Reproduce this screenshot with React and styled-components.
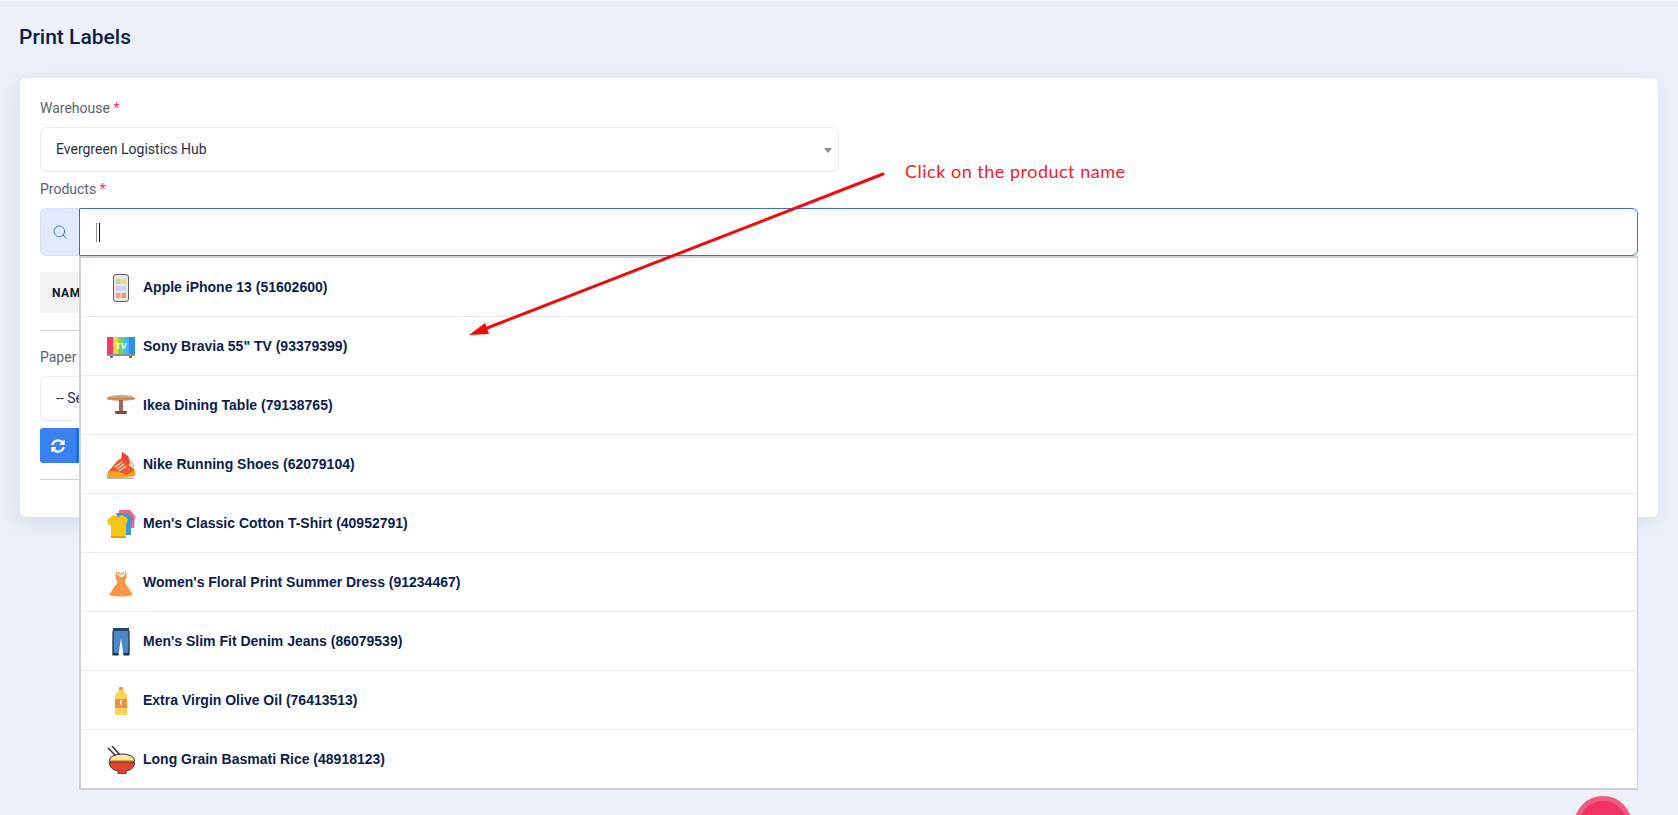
import React from "react";
import styled, { createGlobalStyle } from "styled-components";
import { Search } from "lucide-react";
import { FaSyncAlt } from "react-icons/fa";

const GlobalStyle = createGlobalStyle`
  html, body {
    margin: 0;
    height: 100%;
    overflow: hidden;
    background: #ebf0fa;
    font-family: Roboto, "Liberation Sans", sans-serif;
  }
  * { box-sizing: border-box; }
`;

const Page = styled.div`
  position: relative;
  height: 815px;
  padding: 24px 20px 0 20px;
  border-top: 1px solid #f6f7fb;
`;
const Title = styled.h1`
  margin: 0 0 28px -1px;
  height: 25px;
  font-size: 21px;
  line-height: 25px;
  font-weight: 500;
  color: #0d1f44;
`;
const Card = styled.div`
  background: #fff;
  border-radius: 6px;
  padding: 20px 20px 37px;
  height: 439px;
  box-shadow: -3px 6px 20px rgba(90, 100, 135, 0.14);
`;
const Label = styled.label`
  display: block;
  font-size: 14px;
  line-height: 20px;
  color: #5b6270;
  margin-bottom: 9px;
`;
const Star = styled.span`
  color: #f0355f;
`;
const SelectBox = styled.div`
  position: relative;
  display: flex;
  align-items: center;
  width: 799px;
  height: 45px;
  padding: 0 0 2px 15px;
  border: 1px solid #e9ebf3;
  border-radius: 6px;
  font-size: 14px;
  color: #27304a;
  margin-bottom: 7px;
`;
const Caret = styled.span`
  position: absolute;
  right: 6px;
  top: 20px;
  width: 0;
  height: 0;
  border-left: 4px solid transparent;
  border-right: 4px solid transparent;
  border-top: 5px solid #8a8a8a;
`;
const SearchGroup = styled.div`
  position: relative;
  display: flex;
  height: 48px;
  margin-bottom: 16px;
`;
const Addon = styled.div`
  display: flex;
  align-items: center;
  justify-content: center;
  width: 39px;
  background: #e1ebfd;
  border: 1px solid #d6e3fb;
  border-right: 0;
  border-radius: 6px 0 0 6px;
  color: #3f6fe8;
`;
const SearchInput = styled.div`
  flex: 1;
  display: flex;
  align-items: center;
  gap: 2px;
  padding-left: 16px;
  border: 1px solid #3f68e6;
  border-radius: 0 6px 6px 0;
`;
const Beam = styled.span`
  width: 1px;
  height: 19px;
  background: ${p => p.$dark ? "#10151f" : "#8a8f98"};
`;
const Dropdown = styled.div`
  position: absolute;
  left: 39px;
  right: 0;
  top: 48px;
  z-index: 5;
  background: #fff;
  border: 2px solid #cfd1d8;
  border-right-width: 1px;
`;
const Option = styled.div`
  display: flex;
  align-items: center;
  gap: 8px;
  height: 59px;
  padding: 0 0 0 26px;
  border-bottom: 1px solid #e9ebf1;
  &:last-child {
    height: 58px;
    border-bottom: 0;
  }
`;
const OptionIcon = styled.svg`
  flex: none;
  width: 28px;
  height: 28px;
  margin-top: 1px;
`;
const OptionText = styled.span`
  font-family: "Liberation Sans", Arial, sans-serif;
  font-size: 14px;
  font-weight: 700;
  color: #0b1d4e;
  margin-top: -1px;
`;
const TableHead = styled.div`
  display: flex;
  align-items: center;
  height: 41px;
  padding-left: 12px;
  background: #f3f3f5;
  font-size: 12px;
  font-weight: 700;
  letter-spacing: 0.5px;
  color: #14171f;
`;
const Rule = styled.hr`
  margin: ${p => p.$top}px 0 ${p => p.$bottom}px;
  border: 0;
  border-top: 1px solid #cfd3dc;
`;
const ButtonGroup = styled.div`
  display: flex;
  width: 200px;
  height: 35px;
  border-radius: 3px;
  overflow: hidden;
`;
const RefreshButton = styled.button`
  display: flex;
  align-items: center;
  justify-content: center;
  width: 36px;
  padding: 0;
  border: 0;
  background: #3b82f1;
  color: #fff;
`;
const PrintButton = styled.button`
  flex: 1;
  border: 0;
  background: #1a6cf0;
`;
const Fab = styled.div`
  position: absolute;
  left: 1574px;
  top: 795px;
  width: 58px;
  height: 58px;
  border-radius: 50%;
  background: #f13363;
  border: 5px solid #f25a80;
`;
const Note = styled.div`
  position: absolute;
  left: 905px;
  top: 158px;
  z-index: 7;
  font-family: Lato, sans-serif;
  font-size: 18px;
  line-height: 24px;
  letter-spacing: 0.5px;
  color: #f21c2a;
`;
const ArrowLayer = styled.svg`
  position: absolute;
  left: 0;
  top: 0;
  width: 1678px;
  height: 815px;
  z-index: 6;
  pointer-events: none;
`;

const PhoneIcon = () => (
  <OptionIcon viewBox="0 0 28 28">
    <rect x="6.5" y="0.5" width="15" height="27" rx="2.5" fill="#eee6e6" stroke="#5f5a64" />
    <rect x="9" y="5" width="4.5" height="5" fill="#a8e0a0" /><rect x="14.5" y="5" width="4.5" height="5" fill="#f8dc70" />
    <rect x="9" y="12" width="4.5" height="5" fill="#dcc4f4" /><rect x="14.5" y="12" width="4.5" height="5" fill="#bcd8fa" />
    <rect x="9" y="19" width="4.5" height="5" fill="#f49a9a" /><rect x="14.5" y="19" width="4.5" height="5" fill="#d8a070" />
  </OptionIcon>
);
const TvIcon = () => (
  <OptionIcon viewBox="0 0 28 28">
    <rect x="0" y="4" width="6" height="17" fill="#f5396b" /><rect x="6" y="4" width="5" height="17" fill="#fbd13c" />
    <rect x="11" y="4" width="6" height="17" fill="#7ccf5a" /><rect x="17" y="4" width="5" height="17" fill="#45b6f0" />
    <rect x="22" y="4" width="6" height="17" fill="#2a8ff0" />
    <text x="14" y="16" fontFamily="Liberation Sans" fontWeight="700" fontSize="9" fill="#fff" textAnchor="middle">TV</text>
    <rect x="0" y="21" width="28" height="2" fill="#8d8f8c" /><rect x="3" y="23" width="3" height="2" fill="#77796f" /><rect x="22" y="23" width="3" height="2" fill="#77796f" />
  </OptionIcon>
);
const TableIcon = () => (
  <OptionIcon viewBox="0 0 28 28">
    <ellipse cx="14" cy="6" rx="14" ry="3" fill="#d9a271" />
    <rect x="0" y="6" width="28" height="1.5" rx="0.7" fill="#bb8455" />
    <rect x="12" y="8" width="4" height="11" fill="#a0685a" />
    <rect x="8" y="19" width="12" height="3" rx="1" fill="#7d4d44" />
  </OptionIcon>
);
const ShoeIcon = () => (
  <OptionIcon viewBox="0 0 28 28">
    <path d="M15 1 L20 4 L25 10 L28 15 L26 20 L18 16 Z" fill="#d9d4cc" />
    <path d="M15 1 L21 5 L23 12 L20 16 L14 10 Z" fill="#e5472f" />
    <path d="M6 15 L11 9 L15 7 L21 14 L27 18 L27 24 L2 25 L1 21 Z" fill="#ef5a2c" />
    <path d="M0 24 L3 20 L12 21 L19 24 L28 19 L28 25 L14 27 L0 27 Z" fill="#f7a321" />
    <path d="M8 16 L15 11 M10 18 L17 13 M12 20 L19 15" stroke="#f6e9dc" strokeWidth="1.1" />
    <rect x="0" y="26.5" width="27" height="1.5" rx="0.7" fill="#b4b6b0" />
  </OptionIcon>
);
const ShirtIcon = () => (
  <OptionIcon viewBox="0 0 28 28">
    <path d="M12 0 L23 0 L28 6 L27 18 L23 18 L12 6 Z" fill="#f4637f" />
    <path d="M9 3 L20 3 L26 9 L24 14 L24 25 L14 25 Z" fill="#3f96d4" />
    <path d="M6 5 L11 7 L15 5 L21 9 L19 15 L19 28 L4 28 L4 15 L2 16 L0 10 Z" fill="#f4c518" />
    <rect x="4" y="26" width="15" height="2" fill="#e8a012" />
  </OptionIcon>
);
const DressIcon = () => (
  <OptionIcon viewBox="0 0 28 28">
    <path d="M9 1 L11 7 Q14 9 17 7 L19 1 L19.5 9 L17.5 13 L26 26 Q14 29 2 26 L10.5 13 L8.5 9 Z" fill="#fb9440" />
    <path d="M11 3 Q14 8 17 3" fill="none" stroke="#f0752c" strokeWidth="1.2" />
    <path d="M14 11 V26" stroke="#ffc088" strokeWidth="1" strokeDasharray="1.5 3" />
  </OptionIcon>
);
const JeansIcon = () => (
  <OptionIcon viewBox="0 0 28 28">
    <path d="M6 1 H22 L22.5 27 H16.5 L14 10 L11.5 27 H5.5 Z" fill="#4d88c8" />
    <rect x="6" y="0" width="16" height="3" fill="#23436b" />
    <rect x="5.5" y="25" width="6" height="2.5" fill="#26303f" /><rect x="16.5" y="25" width="6" height="2.5" fill="#26303f" />
    <path d="M6 3 V25 M22 3 V25" stroke="#26303f" strokeWidth="1.2" />
  </OptionIcon>
);
const OilIcon = () => (
  <OptionIcon viewBox="0 0 28 28">
    <rect x="12" y="0" width="4" height="3" fill="#f4a23c" />
    <path d="M12 3 H16 L20 8 V28 H8 V8 Z" fill="#fbd35a" />
    <rect x="8" y="12" width="12" height="9" fill="#f58a45" />
    <rect x="13" y="13" width="2" height="5" fill="#ffe9c9" />
  </OptionIcon>
);
const BowlIcon = () => (
  <OptionIcon viewBox="0 0 28 28">
    <path d="M1 2 L10 11 M5 0 L13 9" stroke="#3d352f" strokeWidth="1.6" />
    <ellipse cx="15" cy="14" rx="12.5" ry="6" fill="#fbe4a8" stroke="#2c2622" strokeWidth="1" />
    <rect x="4" y="14" width="22" height="2" fill="#e3a33a" />
    <path d="M2 16 H28 Q27 24 19 25 V28 H11 V25 Q3 24 2 16 Z" fill="#e5432d" stroke="#2c2622" strokeWidth="0.8" />
  </OptionIcon>
);

const products = [
  { name: "Apple iPhone 13 (51602600)", Icon: PhoneIcon },
  { name: 'Sony Bravia 55" TV (93379399)', Icon: TvIcon },
  { name: "Ikea Dining Table (79138765)", Icon: TableIcon },
  { name: "Nike Running Shoes (62079104)", Icon: ShoeIcon },
  { name: "Men's Classic Cotton T-Shirt (40952791)", Icon: ShirtIcon },
  { name: "Women's Floral Print Summer Dress (91234467)", Icon: DressIcon },
  { name: "Men's Slim Fit Denim Jeans (86079539)", Icon: JeansIcon },
  { name: "Extra Virgin Olive Oil (76413513)", Icon: OilIcon },
  { name: "Long Grain Basmati Rice (48918123)", Icon: BowlIcon },
];

export default function App() {
  return (
    <Page>
      <GlobalStyle />
      <Title>Print Labels</Title>
      <Card>
        <Label>Warehouse <Star>*</Star></Label>
        <SelectBox>
          Evergreen Logistics Hub
          <Caret />
        </SelectBox>
        <Label>Products <Star>*</Star></Label>
        <SearchGroup>
          <Addon><Search size={16} strokeWidth={1.5} /></Addon>
          <SearchInput>
            <Beam />
            <Beam $dark />
          </SearchInput>
          <Dropdown>
            {products.map(({ name, Icon }) => (
              <Option key={name}>
                <Icon />
                <OptionText>{name}</OptionText>
              </Option>
            ))}
          </Dropdown>
        </SearchGroup>
        <TableHead>NAME</TableHead>
        <Rule $top={17} $bottom={16} />
        <Label>Paper Size <Star>*</Star></Label>
        <SelectBox>-- Select --</SelectBox>
        <ButtonGroup>
          <RefreshButton><FaSyncAlt size={14} /></RefreshButton>
          <PrintButton />
        </ButtonGroup>
        <Rule $top={16} $bottom={0} />
      </Card>
      <ArrowLayer viewBox="0 0 1678 815">
        <line x1="883" y1="173" x2="482" y2="329" stroke="#f00c0c" strokeWidth="3" strokeLinecap="round" />
        <polygon points="469,334 485,322 489,333" fill="#f00c0c" />
      </ArrowLayer>
      <Note>Click on the product name</Note>
      <Fab />
    </Page>
  );
}
